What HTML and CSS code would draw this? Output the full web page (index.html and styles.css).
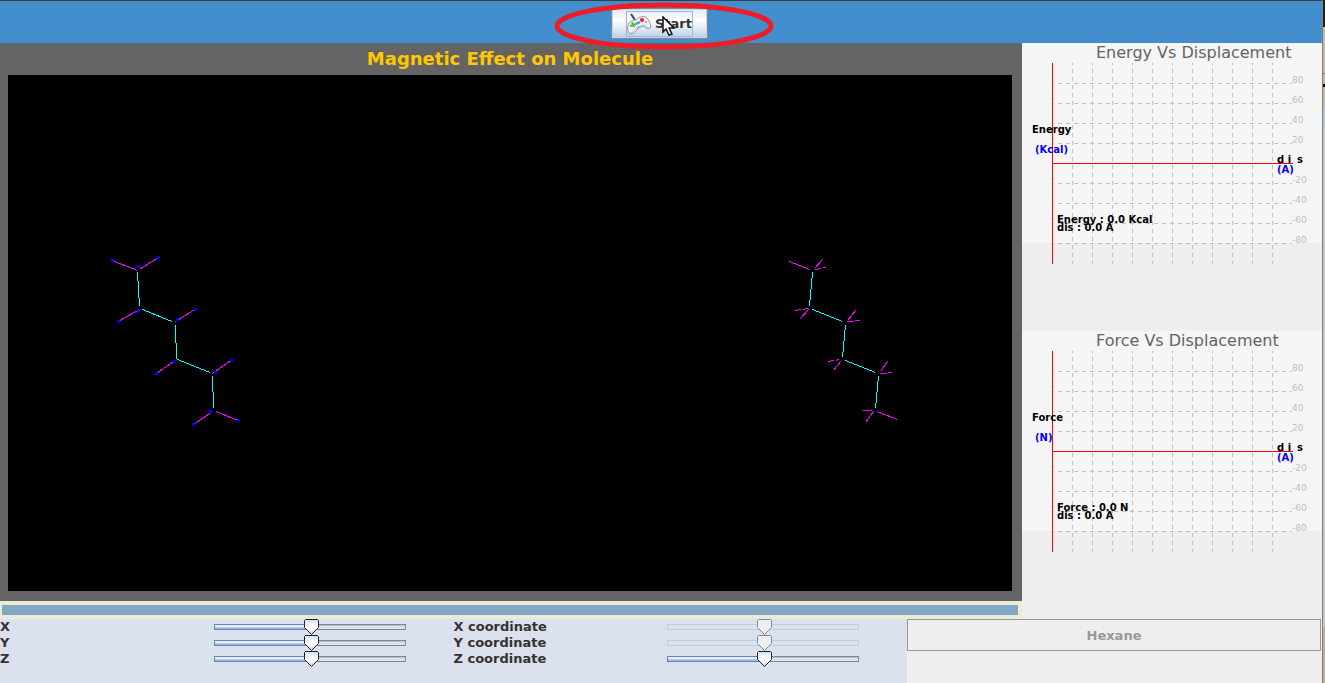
FILE: index.html
```
<!DOCTYPE html>
<html lang="en">
<head>
    <meta charset="UTF-8">
    <meta name="viewport" content="width=device-width, initial-scale=1.0">
    <title>Magnetic Effect on Molecule</title>
    <link rel="stylesheet" href="styles.css">
</head>
<body>

<div class="app">
    <header class="toolbar">
        <div class="start">
            <button class="start-button" type="button">
                <span class="focus">
                    <svg width="26" height="24" viewBox="0 0 26 24" aria-hidden="true">
                        <path d="M4 2l4 6" stroke="#3c4650" stroke-width="2" fill="none"/>
                        <path d="M2 11C4 8 7 8 9 8C12 5 16 4 19 5C22 8 25 14 23 16C21 18 18 15 16 14L11 16C10 19 5 23 3 22C0 20 0 14 2 11z" fill="#f1f2f7" stroke="#8d929f"/>
                        <path d="M3 21c3 0 6-4 7-6l7-2c2 1 4 3 5 3" stroke="#b9bdc9" stroke-width="1" fill="none"/>
                        <path d="M3 14l6-2M5 10l2 5" stroke="#3cc43c" stroke-width="2"/>
                        <path d="M9 12l4-2" stroke="#4a90d9" stroke-width="2"/>
                        <circle cx="15" cy="8" r="2" fill="#f01818"/>
                        <circle cx="19" cy="10" r="1" fill="#9aa0ac"/>
                    </svg>
                    Start
                </span>
            </button>
            <svg class="highlight" width="220" height="50" viewBox="0 0 220 50" aria-hidden="true">
                <ellipse cx="110" cy="25" rx="107" ry="21" fill="none" stroke="#ee1c24" stroke-width="5"/>
            </svg>
            <svg class="cursor" width="14" height="21" viewBox="0 0 14 21" aria-hidden="true">
                <path d="M1 1v15l3-3 3 6 3-1-3-6h5z" fill="#fff" stroke="#111" stroke-width="1.500"/>
            </svg>
        </div>
    </header>

    <main class="main">
        <section class="scene">
            <h1 class="scene-title">Magnetic Effect on Molecule</h1>
            <svg class="canvas" viewBox="0 0 1004 516" shape-rendering="crispEdges">
                <g class="bonds">
                    <path d="M129.500 197.500L131.500 231M134.500 234.500L164 246.500M167.500 250L168.500 284M169.500 284.500L202 297.500M204.500 301L205.500 333"/>
                    <path d="M804.500 197.500L801.500 231M804.500 234.500L834.500 246.500M837.500 250L834.500 282M837.500 285.500L867.500 297.500M870.500 301L867.500 333"/>
                </g>
                <g class="hydrogens">
                    <path d="M129.500 195.500L104 185.500M132 194L150.500 182.500M131.500 234.500L110 246.500M167.500 246.500L187.500 234M168.500 284.500L148.500 298.500M204.500 298.500L223.500 285M204.500 336.500L185.500 349.500M208 336.500L230 345.500"/>
                    <path d="M781.500 186.500L801.500 194.500M806.500 193.500L814.500 184.500M800.500 234.500L791.500 244.500M839.500 245.500L847.500 235.500M832.500 286.500L825.500 295.500M872.500 296.500L879.500 286.500M865.500 336.500L857.500 347.500M869 336.500L889.500 344.500M855 335.500H864"/>
                    <path stroke-dasharray="6 2" d="M807 194.500L818 192.500M787 235.500L800.500 233.500M839.500 246.500L852 245.500M820 286.500L831.500 284.500M872.500 298.500L884.500 297.500"/>
                </g>
                <path class="atoms" d="M103 185h3M149 182h3M129 191h3M109 246h3M129 236h3M168 244h3M186 234h3M147 298h3M165 286h3M206 297h3M222 285h3M184 349h3M229 345h3M201 336h3"/>
            </svg>
        </section>

        <aside class="charts">
            <section class="chart">
                <h2 class="chart-title">Energy Vs Displacement</h2>
                <svg class="plot" width="300" height="201" viewBox="0 0 300 201">
                    <path class="grid" d="M50.500 0V201M70.500 0V201M90.500 0V201M110.500 0V201M130.500 0V201M150.500 0V201M170.500 0V201M190.500 0V201M210.500 0V201M230.500 0V201M250.500 0V201M30 20.500H270M30 40.500H270M30 60.500H270M30 80.500H270M30 120.500H270M30 140.500H270M30 160.500H270M30 180.500H270"/>
                    <g class="ticks">
                        <text x="270" y="20">80</text>
                        <text x="270" y="40">60</text>
                        <text x="270" y="60">40</text>
                        <text x="270" y="80">20</text>
                        <text x="270" y="120">-20</text>
                        <text x="270" y="140">-40</text>
                        <text x="270" y="160">-60</text>
                        <text x="270" y="180">-80</text>
                    </g>
                    <path class="axis" d="M30.500 0V201M30 100.500H271"/>
                    <g class="names">
                        <text x="10" y="70">Energy</text>
                        <text x="255" y="100">d i</text>
                        <text x="275" y="100">s</text>
                        <text x="35" y="160">Energy : 0.0 Kcal</text>
                        <text x="35" y="168">dis : 0.0 A</text>
                    </g>
                    <g class="units">
                        <text x="13" y="90">(Kcal)</text>
                        <text x="255" y="110">(A)</text>
                    </g>
                </svg>
            </section>
            <section class="chart">
                <h2 class="chart-title">Force Vs Displacement</h2>
                <svg class="plot" width="300" height="201" viewBox="0 0 300 201">
                    <path class="grid" d="M50.500 0V201M70.500 0V201M90.500 0V201M110.500 0V201M130.500 0V201M150.500 0V201M170.500 0V201M190.500 0V201M210.500 0V201M230.500 0V201M250.500 0V201M30 20.500H270M30 40.500H270M30 60.500H270M30 80.500H270M30 120.500H270M30 140.500H270M30 160.500H270M30 180.500H270"/>
                    <g class="ticks">
                        <text x="270" y="20">80</text>
                        <text x="270" y="40">60</text>
                        <text x="270" y="60">40</text>
                        <text x="270" y="80">20</text>
                        <text x="270" y="120">-20</text>
                        <text x="270" y="140">-40</text>
                        <text x="270" y="160">-60</text>
                        <text x="270" y="180">-80</text>
                    </g>
                    <path class="axis" d="M30.500 0V201M30 100.500H271"/>
                    <g class="names">
                        <text x="10" y="70">Force</text>
                        <text x="255" y="100">d i</text>
                        <text x="275" y="100">s</text>
                        <text x="35" y="160">Force : 0.0 N</text>
                        <text x="35" y="168">dis : 0.0 A</text>
                    </g>
                    <g class="units">
                        <text x="13" y="90">(N)</text>
                        <text x="255" y="110">(A)</text>
                    </g>
                </svg>
            </section>
        </aside>

        <div class="progress"><div class="progress-bar"></div></div>
    </main>

    <footer class="bottom">
        <div class="controls">
            <div class="sliders">
                <div class="row"><label for="x">X</label><input type="range" id="x" value="51"></div>
                <div class="row"><label for="y">Y</label><input type="range" id="y" value="51"></div>
                <div class="row"><label for="z">Z</label><input type="range" id="z" value="51"></div>
            </div>
            <div class="sliders">
                <div class="row"><label for="cx">X coordinate</label><input type="range" id="cx" value="51" disabled></div>
                <div class="row"><label for="cy">Y coordinate</label><input type="range" id="cy" value="51" disabled></div>
                <div class="row"><label for="cz">Z coordinate</label><input type="range" id="cz" value="51"></div>
            </div>
        </div>
        <div class="molecule">
            <button class="molecule-button" type="button" disabled>Hexane</button>
        </div>
    </footer>
</div>
<div class="edge"></div>

</body>
</html>
```

FILE: styles.css
```
* {
    box-sizing: border-box;
}
body {
    margin: 0;
    min-height: 100vh;
    display: flex;
    background: #eeeeee;
    font-family: "DejaVu Sans", sans-serif;
    font-size: 12px;
    color: #333333;
}
.app {
    flex: 1;
    display: flex;
    flex-direction: column;
}
.edge {
    width: 3px;
    border-left: 1px solid #8a7f6c;
    background: linear-gradient(#222222 27px, #c0b8ac 27px, #c0b8ac 73px, #8a7f6c 73px, #8a7f6c 74px, #c0b8ac 74px, #c0b8ac 84px, #000000 84px, #000000 87px, #c0b8ac 87px, #c0b8ac 108px, #b9c4d0 108px, #b9c4d0 128px, #c4c3c8 128px, #c4c3c8 627px, #b8b0a8 627px);
}

/* toolbar */
.toolbar {
    height: 43px;
    padding: 7px 3px 0 0;
    border-top: 1px solid #3c3c3c;
    background: #428ecd;
    display: flex;
    justify-content: center;
}
.start {
    position: relative;
}
.start-button {
    height: 31px;
    width: 97px;
    padding: 0;
    border: 1px solid #7a8a99;
    outline: 1px solid #c8d4e4;
    outline-offset: -2px;
    background: linear-gradient(#dfe9f4, #ffffff 40%, #b8cfe5);
    font: bold 13px "DejaVu Sans", sans-serif;
    color: #333333;
    display: flex;
    justify-content: center;
    align-items: center;
}
.focus {
    display: flex;
    align-items: center;
    gap: 2px;
    height: 26px;
    border: 1px solid #a3b8cc;
}
.highlight {
    position: absolute;
    left: -57px;
    top: -7px;
    z-index: 1;
}
.cursor {
    position: absolute;
    left: 51px;
    top: 8px;
    z-index: 2;
}

/* scene and charts */
.main {
    flex: 1;
    display: grid;
    grid-template-columns: 1fr 300px;
    grid-template-rows: 1fr 18px;
}
.scene {
    background: #646464;
    padding: 0 10px 10px 8px;
    display: flex;
    flex-direction: column;
}
.scene-title {
    margin: 0;
    font-size: 18px;
    line-height: 32px;
    text-align: center;
    color: #ffc800;
}
.canvas {
    flex: 1;
    width: 100%;
    background: #000000;
}
.bonds, .hydrogens {
    fill: none;
    stroke: #00ffff;
}
.hydrogens {
    stroke: #ff00ff;
}
.atoms {
    stroke: #0000ff;
    stroke-width: 3px;
}
.charts {
    grid-column: 2;
    grid-row: 1 / 3;
}
.chart {
    height: 288px;
    background: linear-gradient(#f5f5f5 200px, #eeeeee 200px);
}
.chart-title {
    margin: 0;
    padding-left: 74px;
    font-size: 16px;
    font-weight: normal;
    line-height: 20px;
    color: #646464;
}
.plot {
    display: block;
}
.grid {
    stroke: #c0c0c0;
    stroke-dasharray: 4 4;
    stroke-dashoffset: 2px;
}
.axis {
    stroke: #ff0000;
}
.ticks {
    fill: #c0c0c0;
    font-size: 9px;
}
.names, .units {
    fill: #000000;
    font-size: 10px;
    font-weight: bold;
}
.units {
    fill: #0000ff;
}
.progress {
    background: #ecead8;
    padding: 4px 4px 4px 2px;
}
.progress-bar {
    height: 10px;
    background: #82a7c1;
}

/* bottom controls */
.bottom {
    height: 64px;
    display: grid;
    grid-template-columns: 1fr 415px;
}
.controls {
    background: #dbe1ed;
    display: grid;
    grid-template-columns: 1fr 1fr;
    font-size: 13px;
    font-weight: bold;
}
.row {
    height: 16px;
    padding-right: 48px;
    display: flex;
    align-items: center;
    justify-content: space-between;
    line-height: 16px;
}
input[type="range"] {
    appearance: none;
    width: 192px;
    height: 16px;
    margin: 0;
    background: none;
}
input[type="range"]::-webkit-slider-runnable-track {
    height: 6px;
    border-left: 1px solid #6382bf;
    border-right: 1px solid #7a8a99;
    background:
        linear-gradient(#6382bf 1px, #c8ddf2 1px, #ffffff 2px, #a3b8cc 4px, #a3b8cc 5px, #6382bf 5px) left / 50% 100% no-repeat,
        linear-gradient(#7a8a99 1px, #b0c0ce 1px, #b0c0ce 2px, #dbe1ed 2px, #dbe1ed 5px, #7a8a99 5px);
}
input[type="range"]::-webkit-slider-thumb {
    appearance: none;
    width: 15px;
    height: 16px;
    margin-top: -5px;
    background: url("data:image/svg+xml,%3Csvg xmlns='http://www.w3.org/2000/svg' width='15' height='16'%3E%3ClinearGradient id='g' x2='0' y2='1'%3E%3Cstop stop-color='%23c8ddf2'/%3E%3Cstop offset='.4' stop-color='%23fff'/%3E%3Cstop offset='.6' stop-color='%23fff'/%3E%3Cstop offset='1' stop-color='%23b8cfe5'/%3E%3C/linearGradient%3E%3Cpath d='M1.5.5h12l1 1v7l-7 7-7-7v-7z' fill='url(%23g)' stroke='%23222'/%3E%3C/svg%3E") no-repeat;
}
input[type="range"]:disabled::-webkit-slider-runnable-track {
    border: 1px solid #b8cfe5;
    background: none;
}
input[type="range"]:disabled::-webkit-slider-thumb {
    margin-top: -6px;
    background: url("data:image/svg+xml,%3Csvg xmlns='http://www.w3.org/2000/svg' width='15' height='16'%3E%3Cpath d='M1.5.5h12l1 1v7l-7 7-7-7v-7z' fill='%23eee' stroke='%237a8a99'/%3E%3C/svg%3E") no-repeat;
}
.molecule {
    padding-right: 1px;
}
.molecule-button {
    width: 100%;
    height: 32px;
    border: 1px solid #999999;
    background: #eeeeee;
    font: bold 13px "DejaVu Sans", sans-serif;
    color: #999999;
}
```
